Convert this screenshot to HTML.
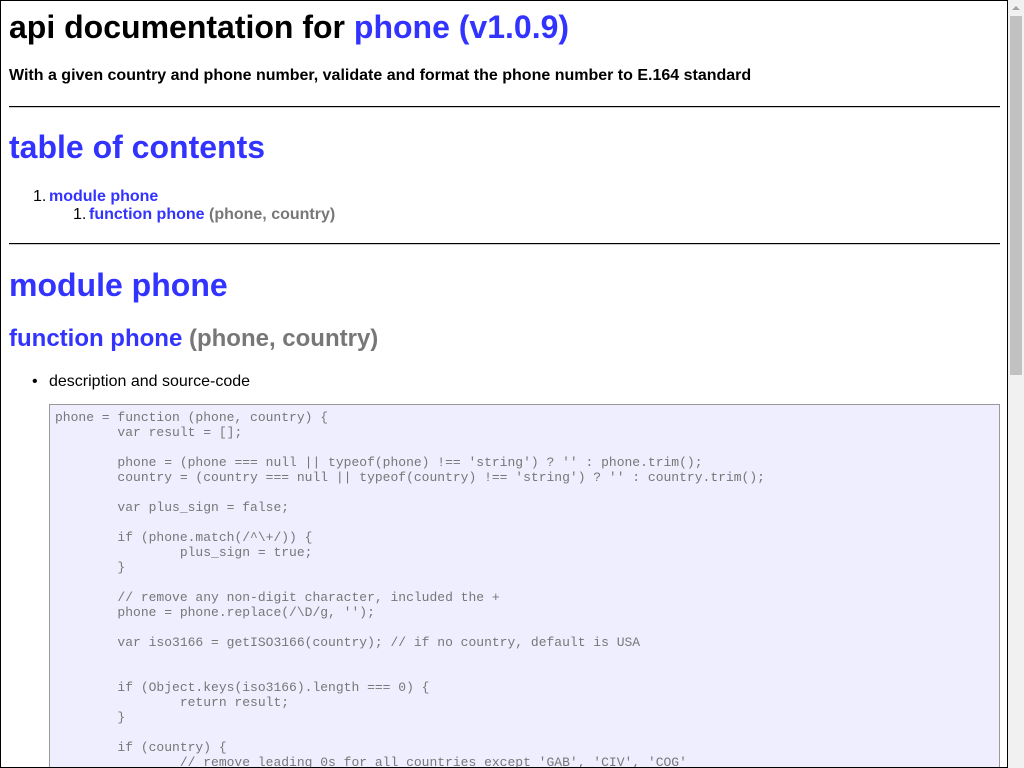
<!DOCTYPE html>
<html><head><meta charset="utf-8"><style>
html,body{margin:0;padding:0;width:1024px;height:768px;overflow:hidden;background:#fff;font-family:"Liberation Sans",sans-serif;}
#pg{position:absolute;left:0;top:0;width:1006px;height:766px;border:1px solid #000;overflow:hidden;}
.a{position:absolute;white-space:nowrap;margin:0;}
.b{color:#33f}.g{color:#777}
h1.a{font-size:32px;font-weight:bold;line-height:37px;}
h2.a{font-size:24px;font-weight:bold;line-height:28px;}
hr.a{left:8px;width:991px;height:0;border:0;border-top:1px solid #000;border-bottom:1px solid #ccc;}
.t{font-size:16px;line-height:18px;}
pre.a{white-space:pre;left:48px;top:403px;width:939px;height:352px;border:1px solid #999;border-bottom:0;background:#eef;color:#777;font-family:"Liberation Mono",monospace;font-size:13px;line-height:15px;padding:5px 5px;tab-size:8;-moz-tab-size:8;overflow:hidden;}
#sb{position:absolute;left:1008px;top:0;width:16px;height:768px;background:#f1f1f1;}
#th{position:absolute;left:2px;top:16px;width:12px;height:359px;background:#c1c1c1;}
#ar{position:absolute;left:4px;top:6px;width:0;height:0;border-left:4px solid transparent;border-right:4px solid transparent;border-bottom:4px solid #a3a3a3;}
</style></head><body>
<div id="pg">
<h1 class="a" style="left:8px;top:8px">api documentation for <span class="b">phone (v1.0.9)</span></h1>
<p class="a t" style="left:8px;top:66px;font-weight:bold">With a given country and phone number, validate and format the phone number to E.164 standard</p>
<hr class="a" style="top:105px">
<h1 class="a b" style="left:8px;top:128px">table of contents</h1>
<div class="a t" style="left:32px;top:187px">1.</div><b class="a t b" style="left:48px;top:187px">module phone</b>
<div class="a t" style="left:72px;top:205px">1.</div><div class="a t" style="left:88px;top:205px"><b class="b">function phone</b> <b class="g">(phone, country)</b></div>
<hr class="a" style="top:242px">
<h1 class="a b" style="left:8px;top:266px">module phone</h1>
<h2 class="a" style="left:8px;top:324px"><span class="b">function phone</span> <span class="g">(phone, country)</span></h2>
<div class="a t" style="left:31px;top:372px">•</div><div class="a t" style="left:48px;top:372px">description and source-code</div>
<pre class="a">phone = function (phone, country) {
	var result = [];

	phone = (phone === null || typeof(phone) !== 'string') ? '' : phone.trim();
	country = (country === null || typeof(country) !== 'string') ? '' : country.trim();

	var plus_sign = false;

	if (phone.match(/^\+/)) {
		plus_sign = true;
	}

	// remove any non-digit character, included the +
	phone = phone.replace(/\D/g, '');

	var iso3166 = getISO3166(country); // if no country, default is USA


	if (Object.keys(iso3166).length === 0) {
		return result;
	}

	if (country) {
		// remove leading 0s for all countries except 'GAB', 'CIV', 'COG'
		if (['GAB', 'CIV', 'COG'].indexOf(iso3166.alpha3) === -1) {
</pre>
</div>
<div id="sb"><div id="ar"></div><div id="th"></div></div>
</body></html>
